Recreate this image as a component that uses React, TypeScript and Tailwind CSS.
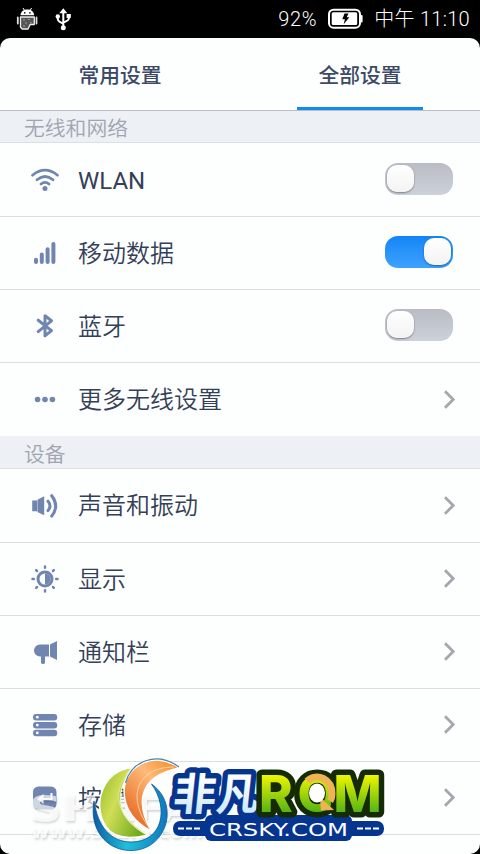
import type { ReactNode } from "react";

const FONT = "font-['Noto_Sans_CJK_SC',sans-serif]";

function StatusBar() {
  return (
    <div className="flex h-[38px] shrink-0 items-center bg-black pl-4 pr-[10px] text-white">
      {/* debugging robot */}
      <svg width="22" height="24" viewBox="0 0 22 24" fill="none">
        <path d="M4.5 8.2C4.8 4.6 7.5 2.6 11.3 2.6s6.5 2 6.8 5.6z" fill="#fff" />
        <path d="M7 1l1.5 2.4M15.6 1l-1.5 2.4" stroke="#fff" strokeWidth="1" />
        <circle cx="8.8" cy="5.9" r=".8" fill="#000" />
        <circle cx="13.9" cy="5.9" r=".8" fill="#000" />
        <path d="M1.8 10.5v6M20.5 10.5v6" stroke="#ddd" strokeWidth="1.8" strokeLinecap="round" />
        <path d="M4.5 10h13.8v7.5h-4.2l-2 4.5H6.2l-1.7-1.8z" fill="#555" stroke="#eee" strokeWidth="1.3" strokeLinejoin="round" />
        <path d="M7 13h2M12 12.5h2M9 16h2M14 15.5h1.5M7 19h2" stroke="#999" strokeWidth="1.2" />
      </svg>
      {/* usb */}
      <svg className="ml-[17px]" width="17" height="24" viewBox="0 0 17 24" fill="none" stroke="#fff" strokeWidth="2">
        <path d="M8.3 4v16M2.8 10v2.2q0 2 5.5 4.3M13.8 9v2.5q0 2-5.5 4" />
        <path d="M8.3 1.2l4 5h-8z" fill="#fff" stroke="none" />
        <circle cx="2.8" cy="9.5" r="2.2" fill="#fff" stroke="none" />
        <path d="M11.6 7h4.2v4h-4.2z" fill="#fff" stroke="none" />
        <circle cx="8.3" cy="20.7" r="2.5" fill="#fff" stroke="none" />
      </svg>
      <div className="ml-auto flex items-center font-['Roboto','Noto_Sans_CJK_SC',sans-serif] font-light">
        <span className="text-[20px] leading-none tracking-[0.6px]">92%</span>
        <svg className="ml-[11px]" width="36" height="22" viewBox="0 0 36 22" fill="none">
          <rect x="1" y="1.7" width="31" height="18" rx="4.5" stroke="#fff" strokeWidth="2" />
          <rect x="3.7" y="4.3" width="25.5" height="12.7" rx="1.5" fill="#fff" />
          <path d="M33.5 8v5.5" stroke="#fff" strokeWidth="2.2" strokeLinecap="round" />
          <path d="M16.5 5.5h4l-1.8 3.8h2.6l-5.6 6.9 1.2-4.9h-2.6z" fill="#000" />
        </svg>
        <span className="ml-[10px] whitespace-nowrap text-[20px] leading-none tracking-[0.3px]">中午 11:10</span>
      </div>
    </div>
  );
}

function Tabs() {
  return (
    <div className="flex h-[73px] shrink-0 border-b border-[#b9bcc2] text-[20.8px] font-medium text-[#3c4a66]">
      <div className="flex flex-1 items-center justify-center pt-px">常用设置</div>
      <div className="flex flex-1 flex-col items-center">
        <div className="flex flex-1 items-center pt-1">全部设置</div>
        <div className="h-[3px] w-[126px] bg-[#128ce8]" />
      </div>
    </div>
  );
}

function SectionHeader({ children, className = "h-[33px]" }: { children: ReactNode; className?: string }) {
  return (
    <h2
      className={`flex shrink-0 items-center border-b border-[#dbe0e4] bg-[#edf0f5] pl-6 pt-[2px] text-[20.8px] font-[350] leading-none text-[#a0a5af] ${className}`}
    >
      {children}
    </h2>
  );
}

function Toggle({ on = false }: { on?: boolean }) {
  return (
    <div
      className={`mb-[2px] flex h-8 w-[68px] items-center rounded-[13px] px-[2px] ${
        on ? "justify-end bg-linear-to-b from-[#0f85f5] to-[#3da2ff]" : "bg-linear-to-b from-[#b9bcc4] to-[#cdd1da]"
      }`}
    >
      <div className="mb-px h-[27px] w-[27px] rounded-[10px] bg-linear-to-b from-white to-[#f3f3f3] shadow-[0_1px_2px_rgba(0,0,0,0.4)]" />
    </div>
  );
}

function Chevron() {
  return (
    <svg className="mr-[-4px]" width="14" height="22" viewBox="0 0 14 22" fill="none" stroke="#a3a7ae" strokeWidth="2.8">
      <path d="M2 2.3L10.2 10.5 2 18.7" />
    </svg>
  );
}

function Icon({ children }: { children: ReactNode }) {
  return (
    <svg width="30" height="30" viewBox="0 0 30 30" fill="none" stroke="#7085b0" strokeWidth="2.7" strokeLinecap="round">
      {children}
    </svg>
  );
}

const BLUE = "#7085b0";

const icons = {
  wlan: (
    <Icon>
      <path d="M2.5 10.2Q15 .2 27.5 10.2M7 14.8Q15 8.2 23 14.8M11 19Q15 15.8 19 19" />
      <circle cx="15" cy="23.5" r="2.5" fill={BLUE} stroke="none" />
    </Icon>
  ),
  signal: (
    <Icon>
      <path d="M6 21.8v2.2M11.8 16.5V24M17.6 11.3V24M23.4 6V24" strokeWidth="4" />
    </Icon>
  ),
  bluetooth: (
    <Icon>
      <path d="M8.2 9.2L21.5 19.6 15 24.8V4.8l6.5 5L8.2 20.6" strokeWidth="3" strokeLinejoin="round" />
    </Icon>
  ),
  more: (
    <Icon>
      <g fill={BLUE} stroke="none">
        <circle cx="7.6" cy="14.5" r="2.8" />
        <circle cx="15" cy="14.5" r="2.8" />
        <circle cx="22.4" cy="14.5" r="2.8" />
      </g>
    </Icon>
  ),
  sound: (
    <Icon>
      <path d="M2.2 9.5h4.8v10.800H2.200zM7.400 8.700L14.200 5.300v19l-6.800-3.400z" fill={BLUE} stroke="none" />
      <path d="M18 10.2q4 4.7 0 9.4M21.7 4.7q8 10.2 0 20.400" strokeWidth="3" />
    </Icon>
  ),
  display: (
    <Icon>
      <circle cx="15" cy="15" r="7" strokeWidth="3" />
      <path d="M15 9.5a5.5 5.5 0 0 1 0 11z" fill={BLUE} stroke="none" />
      <path d="M15 2.5v1.3M15 26.2v1.3M2.5 15h1.3M26.2 15h1.3M6.2 6.2l.8.8M23 23l.8.8M6.2 23.8l.8-.8M23 7l.8-.8" strokeWidth="2.5" />
    </Icon>
  ),
  notice: (
    <Icon>
      <path d="M10 7.5h9v12h-4V25.5q0 1.5-2 1.5t-2-1.5v-6h-1a6 6 0 0 1 0-12zM20 7.5L27 4v19l-7-3.5z" fill={BLUE} stroke="none" />
    </Icon>
  ),
  storage: (
    <Icon>
      <g stroke="none">
        <rect x="3" y="4" width="24.2" height="6.5" rx="3" fill={BLUE} />
        <rect x="3" y="11.9" width="24.2" height="6.5" rx="3" fill={BLUE} />
        <rect x="3" y="19.7" width="24.2" height="6.5" rx="3" fill={BLUE} />
        <g fill="#fff">
          <circle cx="7.3" cy="7.2" r="1.4" />
          <circle cx="7.3" cy="15.1" r="1.4" />
          <circle cx="7.3" cy="22.9" r="1.4" />
        </g>
      </g>
    </Icon>
  ),
  keys: (
    <Icon>
      <rect x="3" y="3.5" width="23.5" height="23" rx="5.5" fill={BLUE} stroke="none" />
      <path d="M21.5 10v6H10M12.5 13L8.5 16l4 3z" stroke="#fff" strokeWidth="2" strokeLinecap="butt" />
    </Icon>
  ),
};

type RowProps = {
  icon: ReactNode;
  label: string;
  control?: ReactNode;
  className?: string;
  labelClass?: string;
};

function Row({ icon, label, control = <Chevron />, className = "h-[73px] border-b", labelClass = "font-[350]" }: RowProps) {
  return (
    <div className={`flex shrink-0 items-center border-[#d9dee3] pl-[30px] pr-[27px] ${className}`}>
      {icon}
      <span
        className={`ml-[18px] mt-px flex-1 font-['Roboto','Noto_Sans_CJK_SC',sans-serif] text-[24px] leading-none text-[#344058] ${labelClass}`}
      >
        {label}
      </span>
      {control}
    </div>
  );
}

function Watermark() {
  return (
    <svg className="absolute left-0 top-[754px]" width="400" height="100" viewBox="0 754 400 100">
      <defs>
        <linearGradient id="green" x1="0" y1="0" x2="1" y2=".6">
          <stop offset="0" stopColor="#8fbb22" />
          <stop offset=".45" stopColor="#d0de58" />
          <stop offset="1" stopColor="#74ac1c" />
        </linearGradient>
        <linearGradient id="orange" x1="1" y1="0" x2=".2" y2="1">
          <stop offset="0" stopColor="#f08a20" />
          <stop offset=".4" stopColor="#ffb978" />
          <stop offset="1" stopColor="#e2621a" />
        </linearGradient>
        <linearGradient id="ring" x1="0" y1="0" x2="1" y2="0">
          <stop offset="0" stopColor="#0d5ba5" />
          <stop offset=".45" stopColor="#1fc0da" />
          <stop offset="1" stopColor="#0f78bd" />
        </linearGradient>
        <linearGradient id="rom" gradientUnits="userSpaceOnUse" x1="0" y1="774" x2="0" y2="812">
          <stop offset="0" stopColor="#f4f800" />
          <stop offset="1" stopColor="#55b414" />
        </linearGradient>
        <linearGradient id="ice" x1="0" y1="0" x2="0" y2="1">
          <stop offset=".3" stopColor="#fff" />
          <stop offset="1" stopColor="#bfe2fa" />
        </linearGradient>
        <filter id="shade" x="-10%" y="-20%" width="120%" height="150%">
          <feDropShadow dx="1" dy="1.5" stdDeviation="1.2" floodColor="#000" floodOpacity=".28" />
        </filter>
      </defs>

      <g filter="url(#shade)" fill="#fff" fillOpacity=".65" fontFamily="'DejaVu Sans', sans-serif">
        <text x="29" y="821" fontSize="35" fontWeight="700" textLength="166" lengthAdjust="spacingAndGlyphs">SHAFA</text>
        <text x="31" y="838" fontSize="16" fontWeight="700" textLength="172" lengthAdjust="spacingAndGlyphs">www.shafa.com</text>
      </g>

      {/* ring and crescents */}
      <path
        d="M94 801C89 829 106 850.5 131 850.5C166 850.5 181 805 151.5 784C169 808 163 842 131 842C112 842 98 828 94 801z"
        fill="url(#ring)"
        stroke="#0a5596"
        strokeWidth=".8"
      />
      <path
        d="M132 767.5C104 770 91 803 106 827C116 841 136 838 148 835C120 820 110 797 132 767.5z"
        fill="url(#green)"
        stroke="#fff"
        strokeWidth="1.5"
      />
      <path
        d="M132 767.5C113 793 116 820 148 835C126 822 104 800 132 767.5z"
        fill="#a6cb35"
        stroke="#eef5c0"
        strokeWidth=".6"
      />
      <path
        d="M179 768C153 749 125 767 124 791C124 809 135 823 151 831C137 805 136 777 179 768z"
        fill="url(#orange)"
        stroke="#fff"
        strokeWidth="1.5"
      />
      <path d="M179 767C156 750 131 762 125.5 783" fill="none" stroke="#4c83ad" strokeWidth="1.2" />
      <path d="M174 767C138 767 125 796 150 829" fill="none" stroke="#ffdcb4" strokeWidth=".8" />

      <rect x="173" y="821" width="211" height="15" rx="7" fill="#063590" />
      <rect x="205" y="815" width="147" height="26" rx="6" fill="#063590" />

      <g strokeLinejoin="round" paintOrder="stroke">
        <g transform="translate(172 809.5) skewX(-6)">
          <text
            fontFamily="'Noto Sans CJK SC', sans-serif"
            fontSize="44"
            fontWeight="700"
            fill="url(#ice)"
            stroke="#063590"
            strokeWidth="11"
            textLength="86"
            lengthAdjust="spacingAndGlyphs"
          >
            非凡
          </text>
        </g>
        <text
          x="259 297.5 333.5"
          y="811.5"
          fontFamily="Inter, sans-serif"
          fontSize="51"
          fontWeight="800"
          fill="url(#rom)"
          stroke="#142b05"
          strokeWidth="11"
        >
          ROM
        </text>
      </g>
      {/* arrow turning round the O */}
      <path d="M307 781C317 772 332 779 332 794q0 4-2 7" fill="none" stroke="#efb452" strokeWidth="7" />
      <path d="M320 797l14 13-13 .5z" fill="#efb452" />
      <ellipse cx="317" cy="793" rx="8" ry="9.5" fill="#fff" />

      <path d="M178 828.5h22M357 828.5h22" stroke="#fff" strokeWidth="2" strokeDasharray="6 2" />
      <text
        x="209"
        y="835.5"
        fontFamily="'DejaVu Sans', sans-serif"
        fontSize="17"
        fill="#fff"
        textLength="139"
        lengthAdjust="spacingAndGlyphs"
      >
        CRSKY.COM
      </text>
    </svg>
  );
}

export default function App() {
  return (
    <div className={`relative h-[854px] w-[480px] overflow-hidden bg-black ${FONT}`}>
      <StatusBar />
      <main className="flex h-[816px] flex-col overflow-hidden rounded-[10px] bg-[#fdfefe]">
        <Tabs />
        <SectionHeader className="h-8">无线和网络</SectionHeader>
        <Row
          icon={icons.wlan}
          label="WLAN"
          control={<Toggle />}
          className="h-[74px] border-b"
          labelClass="pt-[2px] font-normal"
        />
        <Row icon={icons.signal} label="移动数据" control={<Toggle on />} />
        <Row icon={icons.bluetooth} label="蓝牙" control={<Toggle />} />
        <Row icon={icons.more} label="更多无线设置" className="h-[73px]" />
        <SectionHeader>设备</SectionHeader>
        <Row icon={icons.sound} label="声音和振动" className="h-[74px] border-b" />
        <Row icon={icons.display} label="显示" />
        <Row icon={icons.notice} label="通知栏" />
        <Row icon={icons.storage} label="存储" />
        <Row icon={icons.keys} label="按键" />
      </main>
      <Watermark />
    </div>
  );
}
